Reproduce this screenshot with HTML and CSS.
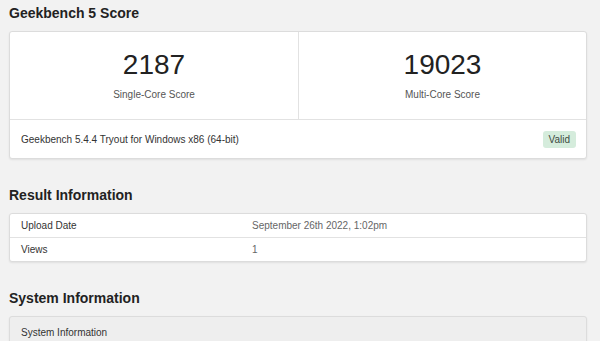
FILE: index.html
```html
<!DOCTYPE html>
<html lang="en">
<head>
<meta charset="utf-8">
<title>Geekbench 5 Score</title>
<link rel="stylesheet" href="styles.css">
</head>
<body>
<main class="page">
  <h2 class="section-title title-first">Geekbench 5 Score</h2>
  <section class="card">
    <div class="scores">
      <div class="score-cell">
        <div class="score-value">2187</div>
        <div class="score-label">Single-Core Score</div>
      </div>
      <div class="score-cell">
        <div class="score-value">19023</div>
        <div class="score-label">Multi-Core Score</div>
      </div>
    </div>
    <div class="card-footer">
      <span class="version">Geekbench 5.4.4 Tryout for Windows x86 (64-bit)</span>
      <span class="badge">Valid</span>
    </div>
  </section>

  <h2 class="section-title">Result Information</h2>
  <section class="card">
    <div class="info-row">
      <div class="info-name">Upload Date</div>
      <div class="info-value">September 26th 2022, 1:02pm</div>
    </div>
    <div class="info-row">
      <div class="info-name">Views</div>
      <div class="info-value">1</div>
    </div>
  </section>

  <h2 class="section-title">System Information</h2>
  <section class="card card-muted">
    <div class="card-head">System Information</div>
  </section>
</main>
</body>
</html>
```
FILE: styles.css
```css
html, body {
  margin: 0;
  padding: 0;
  background: #f2f2f2;
  height: 100%;
  overflow: hidden;
}
body {
  font-family: "Liberation Sans", Arial, sans-serif;
  color: #333;
}
.page {
  padding: 0 13px 0 9px;
}
.section-title {
  margin: 26px 0 8px;
  font-size: 14px;
  line-height: 20px;
  font-weight: bold;
  color: #222;
}
.title-first {
  margin-top: 3px;
}
.card {
  background: #fff;
  border: 1px solid #dcdcdc;
  border-radius: 3px;
  box-shadow: 0 1px 2px rgba(0, 0, 0, 0.08);
}
.scores {
  display: grid;
  grid-template-columns: 1fr 1fr;
  border-bottom: 1px solid #e2e2e2;
}
.score-cell {
  padding: 17px 0;
  text-align: center;
}
.score-cell + .score-cell {
  border-left: 1px solid #e2e2e2;
}
.score-value {
  font-size: 28px;
  line-height: 32px;
  color: #222;
}
.score-label {
  margin-top: 7px;
  font-size: 10px;
  line-height: 14px;
  color: #555;
}
.card-footer {
  display: flex;
  align-items: center;
  justify-content: space-between;
  height: 38px;
  padding: 0 10px 0 11px;
  font-size: 10px;
  color: #333;
}
.badge {
  display: inline-flex;
  align-items: center;
  height: 17px;
  padding: 0 6px;
  border-radius: 3px;
  background: #d5ecdc;
  color: #3d4a42;
  font-size: 10px;
}
.info-row {
  display: grid;
  grid-template-columns: 242px 1fr;
  height: 23px;
  align-items: center;
  font-size: 10px;
}
.info-row + .info-row {
  border-top: 1px solid #e2e2e2;
}
.info-name {
  padding-left: 11px;
  color: #333;
}
.info-value {
  padding-left: 0;
  color: #666;
}
.card-muted {
  background: #eeeeee;
}
.card-head {
  height: 30px;
  display: flex;
  align-items: center;
  padding-left: 11px;
  font-size: 10px;
  color: #333;
}
```
